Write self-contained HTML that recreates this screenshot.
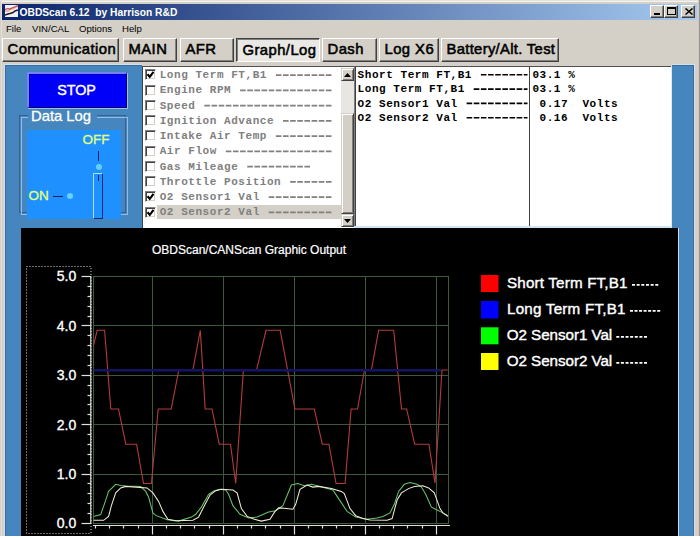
<!DOCTYPE html>
<html><head><meta charset="utf-8"><style>
*{margin:0;padding:0;box-sizing:border-box}
html,body{width:700px;height:538px;overflow:hidden;background:#D4D0C8;font-family:"Liberation Sans",sans-serif;position:relative}
.a{position:absolute}
.btn{position:absolute;background:#D4D0C8;border-top:1px solid #fff;border-left:1px solid #fff;border-right:1px solid #404040;border-bottom:1px solid #404040;box-shadow:inset -1px -1px 0 #808080;display:flex;align-items:center;justify-content:flex-start;padding-left:4px;color:#000;font-weight:normal;-webkit-text-stroke:0.55px #000;letter-spacing:0.45px}
.btn span{position:relative;top:-0.8px;left:0.5px}
.pressed{background:#EAE8E4;border-top:1px solid #404040;border-left:1px solid #404040;border-right:1px solid #fff;border-bottom:1px solid #fff;box-shadow:inset 1px 1px 0 #808080}
.pressed span{left:1.5px;top:0.2px}
.sb{position:absolute;background:#D4D0C8;border-top:1px solid #D4D0C8;border-left:1px solid #D4D0C8;border-right:1px solid #404040;border-bottom:1px solid #404040;box-shadow:inset 1px 1px 0 #fff, inset -1px -1px 0 #808080;display:flex;align-items:center;justify-content:center}
.cb{position:absolute;left:144.5px;width:11px;height:11px;background:#fff;border-top:1px solid #808080;border-left:1px solid #808080;border-right:1px solid #fff;border-bottom:1px solid #fff;box-shadow:inset 1px 1px 0 #404040, inset -1px -1px 0 #D4D0C8}
.mono{position:absolute;font-family:"Liberation Mono",monospace;font-weight:bold;font-size:11px;letter-spacing:0.55px;line-height:13px;white-space:pre}
.sunk{position:absolute;background:#fff;border-top:1px solid #505050;border-left:1px solid #808080;box-shadow:inset 1px 0 0 #404040}
.tbb{position:absolute;top:5px;width:14px;height:13px;background:#D4D0C8;border-top:1px solid #fff;border-left:1px solid #fff;border-right:1px solid #404040;border-bottom:1px solid #404040;box-shadow:inset -1px -1px 0 #808080}
</style></head><body>
<div class="a" style="left:0;top:0;width:700px;height:1px;background:#E4E2DC"></div>
<div class="a" style="left:1px;top:1px;width:697px;height:1px;background:#F4F2EE"></div>
<div class="a" style="left:1px;top:1px;width:1px;height:537px;background:#E2E0DA"></div>
<div class="a" style="left:698px;top:0;width:1px;height:538px;background:#CCC8C2"></div>
<div class="a" style="left:699px;top:0;width:1px;height:538px;background:#96948E"></div>
<div class="a" style="left:2px;top:4px;width:695px;height:16px;background:linear-gradient(to right,#0A246A,#A6CAF0)"></div>
<svg class="a" style="left:5px;top:5px" width="13" height="12" viewBox="0 0 13 12">
<rect width="13" height="12" fill="#F2EEF2"/>
<path d="M0 5.5 L3 6 L5 4 L8 3.5 L10 2 L13 1" stroke="#E8B0B0" stroke-width="2.2" fill="none"/>
<path d="M0 4.5 L3 3.5 L5 4 L8 2.5 L10 2 L13 0.5" stroke="#C05050" stroke-width="1.2" fill="none"/>
<path d="M0 10 L3 9 L5 8.5 L8 7.5 L10 6 L13 5" stroke="#1A1A1A" stroke-width="1.4" fill="none"/>
</svg>
<div class="a" style="left:19.5px;top:5px;height:16px;line-height:16px;color:#fff;font-weight:bold;font-size:10.25px;white-space:pre">OBDScan 6.12  by Harrison R&amp;D</div>
<div class="tbb" style="left:650px"><div class="a" style="left:3px;top:7px;width:6px;height:2px;background:#000"></div></div>
<div class="tbb" style="left:664px"><div class="a" style="left:2px;top:1px;width:9px;height:8px;border:1px solid #000;border-top:2px solid #000"></div></div>
<div class="tbb" style="left:681px"><svg class="a" style="left:3px;top:2px" width="8" height="7" viewBox="0 0 8 7"><path d="M0.5 0.5 L7.5 6.5 M7.5 0.5 L0.5 6.5" stroke="#000" stroke-width="1.5"/></svg></div>
<div class="a" style="left:6px;top:21.7px;font-size:9.6px;line-height:14px;color:#000;white-space:pre">File</div>
<div class="a" style="left:32px;top:21.7px;font-size:9.6px;line-height:14px;color:#000;white-space:pre">VIN/CAL</div>
<div class="a" style="left:79px;top:21.7px;font-size:9.6px;line-height:14px;color:#000;white-space:pre">Options</div>
<div class="a" style="left:122px;top:21.7px;font-size:9.6px;line-height:14px;color:#000;white-space:pre">Help</div>
<div class="btn" style="left:2px;top:38px;width:117px;height:24px;"><span style="font-size:14.8px">Communication</span></div>
<div class="btn" style="left:123px;top:38px;width:54px;height:24px;"><span style="font-size:14.8px">MAIN</span></div>
<div class="btn" style="left:180px;top:38px;width:54px;height:24px;"><span style="font-size:14.8px">AFR</span></div>
<div class="btn pressed" style="left:236px;top:38px;width:84px;height:24px;"><span style="font-size:14.8px">Graph/Log</span></div>
<div class="btn" style="left:322px;top:38px;width:55px;height:24px;"><span style="font-size:14.8px">Dash</span></div>
<div class="btn" style="left:379px;top:38px;width:60px;height:24px;"><span style="font-size:14.8px">Log X6</span></div>
<div class="btn" style="left:441px;top:38px;width:118px;height:24px;"><span style="font-size:14.8px;letter-spacing:0.32px">Battery/Alt. Test</span></div>
<div class="a" style="left:4px;top:64px;width:691px;height:472px;background:#4686BE;border-left:1px solid #D0E2F0;border-top:1px solid #D0E2F0;border-right:1px solid #D8E2EA;box-shadow:inset 1px 1px 0 #3C6C9C, inset -1px 0 0 #3C6C9C"></div>
<div class="a" style="left:27px;top:72px;width:100px;height:36px;background:#0000F8;border-top:2px solid #7880FF;border-left:2px solid #7880FF;border-right:1px solid #000070;border-bottom:1px solid #000070;box-shadow:1px 1px 0 #9CC0E4, inset 1px 1px 0 #0000B8;color:#fff;font-size:14.3px;text-align:center;line-height:33px;-webkit-text-stroke:0.4px #fff;text-indent:-2px">STOP</div>
<div class="a" style="left:19px;top:115px;width:107px;height:98px;border:1px solid #37628E"></div><div class="a" style="left:21px;top:117px;width:107px;height:98px;border:1px solid #94BCE4"></div>
<div class="a" style="left:28px;top:109px;padding:0 5.5px 0 3px;background:#4686BE;color:#fff;font-size:14.8px;line-height:15px;-webkit-text-stroke:0.3px #fff">Data Log</div>
<div class="a" style="left:27px;top:130px;width:94px;height:89px;background:#1E90FF"></div>
<div class="a" style="left:82.5px;top:133px;color:#E4FF78;font-size:13.5px;line-height:14px;-webkit-text-stroke:0.3px #E4FF78">OFF</div>
<div class="a" style="left:97.5px;top:151px;width:1px;height:10px;background:#102060"></div>
<div class="a" style="left:95.5px;top:164.2px;width:6px;height:6px;border-radius:50%;background:#66D0FA"></div>
<div class="a" style="left:93px;top:173px;width:10px;height:46px;border-left:1px solid #A8E0FF;border-top:1px solid #A8E0FF;border-right:1px solid #102870;border-bottom:1px solid #102870"></div>
<div class="a" style="left:98px;top:175px;width:1px;height:6px;background:#102060"></div>
<div class="a" style="left:28.5px;top:189px;color:#E4FF78;font-size:13.5px;line-height:14px;-webkit-text-stroke:0.3px #E4FF78">ON</div>
<div class="a" style="left:53px;top:195.5px;width:10px;height:1px;background:#102060"></div>
<div class="a" style="left:66.5px;top:193px;width:6px;height:6px;border-radius:50%;background:#66D0FA"></div>
<div class="a" style="left:142px;top:64px;width:530px;height:2px;background:#D4D0C8"></div>
<div class="sunk" style="left:142px;top:66px;width:214px;height:162px;border-left:1px solid #404040;box-shadow:none"></div>
<div class="cb" style="top:69.4px"><svg width="10" height="10" viewBox="0 0 10 10" style="position:absolute;left:-1px;top:-1px"><path d="M2.5 5.2 L4.8 7.8 L8.5 2.8" stroke="#000" stroke-width="2.1" fill="none"/></svg></div><div class="mono" style="left:159.70px;top:69.00px;color:#808080">Long&nbsp;Term&nbsp;FT,B1&nbsp;</div><div class="cb" style="top:84.7px"></div><div class="mono" style="left:159.70px;top:84.25px;color:#808080">Engine&nbsp;RPM&nbsp;</div><div class="cb" style="top:99.9px"></div><div class="mono" style="left:159.70px;top:99.50px;color:#808080">Speed&nbsp;</div><div class="cb" style="top:115.2px"></div><div class="mono" style="left:159.70px;top:114.75px;color:#808080">Ignition&nbsp;Advance&nbsp;</div><div class="cb" style="top:130.4px"></div><div class="mono" style="left:159.70px;top:130.00px;color:#808080">Intake&nbsp;Air&nbsp;Temp&nbsp;</div><div class="cb" style="top:145.7px"></div><div class="mono" style="left:159.70px;top:145.25px;color:#808080">Air&nbsp;Flow&nbsp;</div><div class="cb" style="top:160.9px"></div><div class="mono" style="left:159.70px;top:160.50px;color:#808080">Gas&nbsp;Mileage&nbsp;</div><div class="cb" style="top:176.2px"></div><div class="mono" style="left:159.70px;top:175.75px;color:#808080">Throttle&nbsp;Position&nbsp;</div><div class="cb" style="top:191.4px"><svg width="10" height="10" viewBox="0 0 10 10" style="position:absolute;left:-1px;top:-1px"><path d="M2.5 5.2 L4.8 7.8 L8.5 2.8" stroke="#000" stroke-width="2.1" fill="none"/></svg></div><div class="mono" style="left:159.70px;top:191.00px;color:#808080">O2&nbsp;Sensor1&nbsp;Val&nbsp;</div><div class="a" style="left:157px;top:205.1px;width:184px;height:14.2px;background:#D4D0C8"></div><div class="cb" style="top:206.7px"><svg width="10" height="10" viewBox="0 0 10 10" style="position:absolute;left:-1px;top:-1px"><path d="M2.5 5.2 L4.8 7.8 L8.5 2.8" stroke="#000" stroke-width="2.1" fill="none"/></svg></div><div class="mono" style="left:159.70px;top:206.25px;color:#808080">O2&nbsp;Sensor2&nbsp;Val&nbsp;</div>
<svg class="a" style="left:0;top:0" width="700" height="538"><line x1="275.85" y1="75.10" x2="331.50" y2="75.10" stroke="#808080" stroke-width="1.6" stroke-dasharray="5.6 1.55"/><line x1="240.10" y1="90.35" x2="331.50" y2="90.35" stroke="#808080" stroke-width="1.6" stroke-dasharray="5.6 1.55"/><line x1="204.35" y1="105.60" x2="331.50" y2="105.60" stroke="#808080" stroke-width="1.6" stroke-dasharray="5.6 1.55"/><line x1="283.00" y1="120.85" x2="331.50" y2="120.85" stroke="#808080" stroke-width="1.6" stroke-dasharray="5.6 1.55"/><line x1="275.85" y1="136.10" x2="331.50" y2="136.10" stroke="#808080" stroke-width="1.6" stroke-dasharray="5.6 1.55"/><line x1="225.80" y1="151.35" x2="331.50" y2="151.35" stroke="#808080" stroke-width="1.6" stroke-dasharray="5.6 1.55"/><line x1="247.25" y1="166.60" x2="310.05" y2="166.60" stroke="#808080" stroke-width="1.6" stroke-dasharray="5.6 1.55"/><line x1="290.15" y1="181.85" x2="331.50" y2="181.85" stroke="#808080" stroke-width="1.6" stroke-dasharray="5.6 1.55"/><line x1="268.70" y1="197.10" x2="331.50" y2="197.10" stroke="#808080" stroke-width="1.6" stroke-dasharray="5.6 1.55"/><line x1="268.70" y1="212.35" x2="331.50" y2="212.35" stroke="#808080" stroke-width="1.6" stroke-dasharray="5.6 1.55"/></svg>
<div class="a" style="left:341px;top:68px;width:13px;height:158px;background:#E8E6E2"></div>
<div class="sb" style="left:341px;top:68px;width:13px;height:13px"><svg width="7" height="4" viewBox="0 0 7 4"><path d="M0 4 L3.5 0 L7 4Z" fill="#000"/></svg></div>
<div class="sb" style="left:341px;top:113px;width:13px;height:101px"></div>
<div class="sb" style="left:341px;top:214px;width:13px;height:13px"><svg width="7" height="4" viewBox="0 0 7 4"><path d="M0 0 L3.5 4 L7 0Z" fill="#000"/></svg></div>
<div class="sunk" style="left:354px;top:66px;width:176px;height:160px"></div>
<div class="mono" style="left:357.60px;top:68.90px;color:#000">Short&nbsp;Term&nbsp;FT,B1&nbsp;</div><div class="mono" style="left:357.60px;top:83.20px;color:#000">Long&nbsp;Term&nbsp;FT,B1&nbsp;</div><div class="mono" style="left:357.60px;top:97.50px;color:#000">O2&nbsp;Sensor1&nbsp;Val&nbsp;</div><div class="mono" style="left:357.60px;top:111.80px;color:#000">O2&nbsp;Sensor2&nbsp;Val&nbsp;</div><svg class="a" style="left:0;top:0" width="700" height="538"><line x1="480.90" y1="74.80" x2="527.50" y2="74.80" stroke="#000" stroke-width="1.6" stroke-dasharray="5.6 1.55"/><line x1="473.75" y1="89.10" x2="527.50" y2="89.10" stroke="#000" stroke-width="1.6" stroke-dasharray="5.6 1.55"/><line x1="466.60" y1="103.40" x2="527.50" y2="103.40" stroke="#000" stroke-width="1.6" stroke-dasharray="5.6 1.55"/><line x1="466.60" y1="117.70" x2="527.50" y2="117.70" stroke="#000" stroke-width="1.6" stroke-dasharray="5.6 1.55"/></svg>
<div class="sunk" style="left:529px;top:66px;width:142px;height:160px;border-left:1px solid #404040;box-shadow:none"></div>
<div class="a" style="left:354px;top:226px;width:318px;height:2px;background:#D0E4F4"></div>
<div class="a" style="left:671px;top:66px;width:1px;height:162px;background:#DCE8F2"></div>
<div class="mono" style="left:532.40px;top:68.90px;color:#000">03.1&nbsp;%</div><div class="mono" style="left:532.40px;top:83.20px;color:#000">03.1&nbsp;%</div><div class="mono" style="left:532.40px;top:97.50px;color:#000">&nbsp;0.17&nbsp;&nbsp;Volts</div><div class="mono" style="left:532.40px;top:111.80px;color:#000">&nbsp;0.16&nbsp;&nbsp;Volts</div>
<div class="a" style="left:20.5px;top:228px;width:658.5px;height:308px;background:#000;border-right:1px solid #C8DCF0"></div>
<svg class="a" style="left:0;top:0" width="700" height="538" viewBox="0 0 700 538">
<text x="152" y="253.5" fill="#fff" stroke="#fff" stroke-width="0.2" font-family="Liberation Sans" font-size="12">OBDScan/CANScan Graphic Output</text>
<rect x="26.5" y="266.5" width="64.5" height="267" fill="none" stroke="#D8D8D8" stroke-dasharray="1 2"/>
<g stroke="#3C583C" stroke-width="1" fill="none"><line x1="152.5" y1="276.5" x2="152.5" y2="523.5"/><line x1="223.5" y1="276.5" x2="223.5" y2="523.5"/><line x1="294.5" y1="276.5" x2="294.5" y2="523.5"/><line x1="365.5" y1="276.5" x2="365.5" y2="523.5"/><line x1="436.5" y1="276.5" x2="436.5" y2="523.5"/><line x1="93.5" y1="474.5" x2="448.5" y2="474.5"/><line x1="93.5" y1="424.5" x2="448.5" y2="424.5"/><line x1="93.5" y1="375.5" x2="448.5" y2="375.5"/><line x1="93.5" y1="325.5" x2="448.5" y2="325.5"/></g>
<rect x="93.5" y="276.5" width="355" height="247" fill="none" stroke="#3C5C3C"/>
<polyline points="93.5,345.7 97.2,330.3 104.6,330.3 110.8,409 118.5,409 125.8,444.2 136.6,444.2 143.5,483.5 151.4,483.5 158.2,409 171.2,409 178.8,370 192.9,370 200.3,330.3 205.2,409 212,409 219.2,444.2 230.5,444.2 235.7,483.5 243.4,370 256.6,370 266,330.3 280.2,330.3 294.9,409 314.3,409 322.3,444.2 328.9,444.2 336.1,483.5 345.1,483.5 351.1,409 357.5,409 364.5,370 371.4,370 378.6,330.3 393.7,330.3 401.5,409 406.6,409 414.7,444.2 428.9,444.2 435,483 442,370 447.7,370" fill="none" stroke="#B43C3C" stroke-width="1.1"/>
<line x1="93.5" y1="370.3" x2="441" y2="370.3" stroke="#141466" stroke-width="2.4"/>
<polyline points="93.5,516.4 100.7,514.6 104.3,504.3 108.6,491.4 115.7,484.3 120.7,485.4 125.7,486 140.7,486.6 145.7,491.4 148.6,497 152.9,512.9 155.7,515.4 167.1,519.7 178.6,521.1 191.4,517.1 195.7,514.3 201.4,507.1 208.6,494.3 214.3,490.7 220,489.3 225.7,490 228.6,494.3 232.9,505.7 240,514.3 248.6,517.9 257.1,517.1 268.6,512.1 275.7,510.7 282.9,505.7 291.4,485 297.9,483.6 304.3,485.7 311.4,484.3 317.1,485.7 332.9,490 338.6,498.6 347.1,511.4 355.7,517.1 367.1,519.3 377.1,517.9 382.9,516.4 390,512.9 394.3,504.3 398.6,491.4 404.3,484.3 410,482.6 417.1,484.3 421.4,487.1 425.7,494.3 431.4,507.1 437.1,510 441.4,512.1 447.9,515.7" fill="none" stroke="#66C466" stroke-width="1.05"/>
<polyline points="93.5,520.3 103.6,520.3 108.6,516.4 111.4,505.7 115.7,492.9 120.7,487.9 125.7,486.4 147.1,487.9 152.9,492.9 158.6,501.4 162.9,511.4 167.9,519.3 175.7,520.7 192.9,520.3 198.6,517.1 202.9,508.6 210,495 215.7,490.7 221.4,489.3 232.9,490 237.1,492.9 241.4,508.6 247.1,516.4 254.3,519.3 261.4,521.1 270,519.3 275,511.4 278.6,507.9 284.3,508.3 292.9,509.3 295.7,504.3 300,489.3 307.1,485 312.9,487.1 318.6,486.4 331.4,488.6 341.4,491.4 344.3,493.6 350,508.6 355.7,515.7 362.9,518.6 370,520 387.1,520.3 392.1,518.6 397.1,500 401.4,492.9 408.6,488.6 414.3,486.4 422.9,485.7 428.6,487.9 434.3,492.9 440,508.6 442.9,512.9 447.9,516.4" fill="none" stroke="#EEEED6" stroke-width="1.05"/>
<g stroke="#E0E0E0" stroke-width="1.2"><line x1="81.5" y1="523.5" x2="91" y2="523.5"/><line x1="87.5" y1="513.5" x2="91" y2="513.5"/><line x1="87.5" y1="503.5" x2="91" y2="503.5"/><line x1="87.5" y1="493.5" x2="91" y2="493.5"/><line x1="87.5" y1="483.5" x2="91" y2="483.5"/><line x1="81.5" y1="474.5" x2="91" y2="474.5"/><line x1="87.5" y1="464.5" x2="91" y2="464.5"/><line x1="87.5" y1="454.5" x2="91" y2="454.5"/><line x1="87.5" y1="444.5" x2="91" y2="444.5"/><line x1="87.5" y1="434.5" x2="91" y2="434.5"/><line x1="81.5" y1="424.5" x2="91" y2="424.5"/><line x1="87.5" y1="414.5" x2="91" y2="414.5"/><line x1="87.5" y1="404.5" x2="91" y2="404.5"/><line x1="87.5" y1="395.5" x2="91" y2="395.5"/><line x1="87.5" y1="385.5" x2="91" y2="385.5"/><line x1="81.5" y1="375.5" x2="91" y2="375.5"/><line x1="87.5" y1="365.5" x2="91" y2="365.5"/><line x1="87.5" y1="355.5" x2="91" y2="355.5"/><line x1="87.5" y1="345.5" x2="91" y2="345.5"/><line x1="87.5" y1="335.5" x2="91" y2="335.5"/><line x1="81.5" y1="325.5" x2="91" y2="325.5"/><line x1="87.5" y1="316.5" x2="91" y2="316.5"/><line x1="87.5" y1="306.5" x2="91" y2="306.5"/><line x1="87.5" y1="296.5" x2="91" y2="296.5"/><line x1="87.5" y1="286.5" x2="91" y2="286.5"/><line x1="81.5" y1="276.5" x2="91" y2="276.5"/><line x1="95.5" y1="525" x2="95.5" y2="528.5"/><line x1="109.5" y1="525" x2="109.5" y2="528.5"/><line x1="123.5" y1="525" x2="123.5" y2="528.5"/><line x1="138.5" y1="525" x2="138.5" y2="528.5"/><line x1="152.5" y1="525" x2="152.5" y2="534.5"/><line x1="166.5" y1="525" x2="166.5" y2="528.5"/><line x1="180.5" y1="525" x2="180.5" y2="528.5"/><line x1="194.5" y1="525" x2="194.5" y2="528.5"/><line x1="209.5" y1="525" x2="209.5" y2="528.5"/><line x1="223.5" y1="525" x2="223.5" y2="534.5"/><line x1="237.5" y1="525" x2="237.5" y2="528.5"/><line x1="251.5" y1="525" x2="251.5" y2="528.5"/><line x1="265.5" y1="525" x2="265.5" y2="528.5"/><line x1="280.5" y1="525" x2="280.5" y2="528.5"/><line x1="294.5" y1="525" x2="294.5" y2="534.5"/><line x1="308.5" y1="525" x2="308.5" y2="528.5"/><line x1="322.5" y1="525" x2="322.5" y2="528.5"/><line x1="336.5" y1="525" x2="336.5" y2="528.5"/><line x1="351.5" y1="525" x2="351.5" y2="528.5"/><line x1="365.5" y1="525" x2="365.5" y2="534.5"/><line x1="379.5" y1="525" x2="379.5" y2="528.5"/><line x1="393.5" y1="525" x2="393.5" y2="528.5"/><line x1="407.5" y1="525" x2="407.5" y2="528.5"/><line x1="422.5" y1="525" x2="422.5" y2="528.5"/><line x1="436.5" y1="525" x2="436.5" y2="534.5"/>
<line x1="90.8" y1="276" x2="90.8" y2="523.5"/>
<line x1="93" y1="525.5" x2="450" y2="525.5"/>
</g>
<g fill="#fff" stroke="#fff" stroke-width="0.35" font-family="Liberation Sans" font-size="14"><text x="76.2" y="528.3" text-anchor="end">0.0</text><text x="76.2" y="478.9" text-anchor="end">1.0</text><text x="76.2" y="429.5" text-anchor="end">2.0</text><text x="76.2" y="380.1" text-anchor="end">3.0</text><text x="76.2" y="330.7" text-anchor="end">4.0</text><text x="76.2" y="281.3" text-anchor="end">5.0</text></g>
<rect x="481" y="275" width="17.5" height="17" fill="#FF0000"/>
<rect x="481" y="301" width="17.5" height="17.5" fill="#0000FF"/>
<rect x="481" y="327.3" width="17.5" height="17" fill="#00FF00"/>
<rect x="481" y="353" width="17.5" height="17" fill="#FFFF00"/>
<g fill="#fff" stroke="#fff" stroke-width="0.4" font-family="Liberation Sans" font-size="15.2" lengthAdjust="spacing">
<text x="507" y="288.3" textLength="120.5" lengthAdjust="spacing">Short Term FT,B1</text>
<line x1="632" y1="284.8" x2="658.3" y2="284.8" stroke-width="1.7" stroke-dasharray="3 1.66"/>
<text x="507" y="314.3" textLength="118.5" lengthAdjust="spacing">Long Term FT,B1</text>
<line x1="630" y1="310.8" x2="660.2" y2="310.8" stroke-width="1.7" stroke-dasharray="3 1.53"/>
<text x="506.7" y="340.3" textLength="105.5" lengthAdjust="spacing">O2 Sensor1 Val</text>
<line x1="616.3" y1="336.8" x2="647" y2="336.8" stroke-width="1.7" stroke-dasharray="3 1.62"/>
<text x="506.7" y="366.3" textLength="105.5" lengthAdjust="spacing">O2 Sensor2 Val</text>
<line x1="616.3" y1="362.8" x2="647" y2="362.8" stroke-width="1.7" stroke-dasharray="3 1.62"/>
</g>
</svg>
<div class="a" style="left:0;top:536px;width:700px;height:2px;background:#fff"></div>
</body></html>
